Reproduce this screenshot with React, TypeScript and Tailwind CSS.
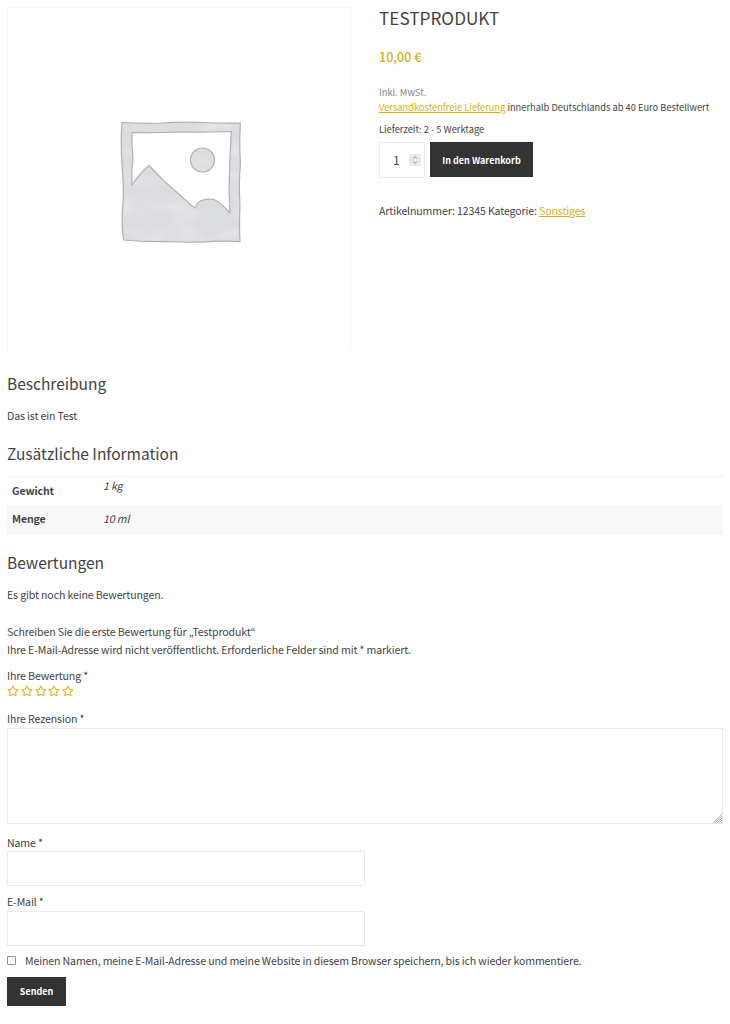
import { useState } from "react";
import { FaRegStar } from "react-icons/fa";

const attributes = [
  { label: "Gewicht", value: "1 kg" },
  { label: "Menge", value: "10 ml" },
];

const frame =
  "M22 22.5 Q45 23.8 62 23 Q82 21.5 103 22.5 Q122 23.5 140.5 23 Q139 42 140.5 63 Q138.5 85 140 105 Q139 125 140 141.5 Q122 140.8 105 141.8 Q85 142.8 65 141.5 Q45 142 23.5 140 Q21 122 23 102 Q24 85 22 65 Q20.5 42 22 22.5 Z";
const opening =
  "M32 32.5 Q55 33 78 32 Q105 32.5 131.5 31.5 Q130 50 129.5 72 Q128.5 92 130 113 Q122 103.5 114 99.5 Q106 98.5 100.5 101 Q96.5 103 95.5 108 Q91 106 87 101.5 L64 81 L49 65.5 Q40 73 32 85 Q31 72 33 58 Q31.5 45 32 32.5 Z";

function PlaceholderImage() {
  return (
    <svg viewBox="0 0 160 160" className="w-[160px] h-[160px]">
      <defs>
        <filter id="wash" x="0" y="0" width="100%" height="100%">
          <feTurbulence type="fractalNoise" baseFrequency="0.03 0.07" numOctaves="3" seed="4" />
          <feColorMatrix values="0 0 0 0 0.79  0 0 0 0 0.8  0 0 0 0 0.82  1.6 0 0 0 -0.6" />
          <feComposite in2="SourceGraphic" operator="in" result="spots" />
          <feMerge>
            <feMergeNode in="SourceGraphic" />
            <feMergeNode in="spots" />
          </feMerge>
        </filter>
      </defs>
      <g fill="#dbdce0" filter="url(#wash)">
        <path fillRule="evenodd" d={`${frame} ${opening}`} />
        <circle cx="102.5" cy="60" r="12" />
      </g>
      <g fill="none" stroke="#b0b0b2" strokeWidth="1.2" strokeLinejoin="round">
        <path d={frame} />
        <path d={opening} />
        <circle cx="102.5" cy="60" r="12" />
      </g>
    </svg>
  );
}

export default function App() {
  const [rating, setRating] = useState(0);

  return (
    <div className="w-[730px] h-[1024px] overflow-hidden bg-white pt-[5px] px-[7px] font-['Noto_Sans_CJK_KR','Noto_Sans',sans-serif] text-[10.6px] tracking-[-0.14px] leading-[18px] text-[#434343] whitespace-nowrap">
      {/* Product */}
      <div className="flex gap-7 h-[345px]">
        <div className="w-[344px] h-[343px] mt-[2px] shrink-0 border border-b-0 border-[#f5f5f5] flex items-center justify-center">
          <div className="pt-[2px] pl-[2px]">
            <PlaceholderImage />
          </div>
        </div>

        <div className="flex-1 min-w-0">
          <h1 className="mt-px text-[17.2px] leading-6 tracking-normal">TESTPRODUKT</h1>
          <p className="mt-[17px] text-[12.6px] leading-5 tracking-normal font-medium text-[#d9ae16]">10,00 €</p>
          <p className="mt-[18px] text-[9.3px] leading-[14px] tracking-normal text-[#858585]">Inkl. MwSt.</p>
          <p className="mt-px text-[9.3px] leading-[14px] tracking-normal">
            <a href="#" className="text-[#d9ae16] underline">Versandkostenfreie Lieferung</a> innerhalb Deutschlands ab 40 Euro Bestellwert
          </p>
          <p className="mt-2 text-[9.3px] leading-[14px] tracking-normal">Lieferzeit: 2 - 5 Werktage</p>

          <div className="mt-[6px] flex gap-[5px] h-9">
            <div className="w-[46px] h-9 border border-[#ececec] flex items-center justify-between pl-[13px] pr-[3px]">
              <span className="text-[12px]">1</span>
              <span className="w-3 h-3 bg-[#e9e9ed] flex items-center justify-center">
                <svg viewBox="0 0 12 12" className="w-3 h-3" fill="none" stroke="#86868a" strokeWidth="1">
                  <path d="M4 4.5 L6 2.5 L8 4.5 M4 7.5 L6 9.5 L8 7.5" />
                </svg>
              </span>
            </div>
            <button className="w-[103px] h-[35px] pt-[2px] bg-[#333333] text-white font-bold text-[9px] tracking-normal">In den Warenkorb</button>
          </div>

          <p className="mt-6">
            Artikelnummer: 12345 Kategorie: <a href="#" className="text-[#d9ae16] underline">Sonstiges</a>
          </p>
        </div>
      </div>

      {/* Description */}
      <h2 className="mt-[21px] text-[15.5px] leading-6 tracking-normal">Beschreibung</h2>
      <p className="mt-3">Das ist ein Test</p>

      {/* Attributes */}
      <h2 className="mt-4 text-[15.5px] leading-6 tracking-normal">Zusätzliche Information</h2>
      <table className="mt-[11px] w-full border-collapse">
        <tbody>
          {attributes.map((row, i) => (
            <tr key={row.label} className={i % 2 ? "h-7 bg-[#f8f8f8] border-b border-[#f1f1f1]" : "h-7 border-t border-[#f1f1f1]"}>
              <th className="w-[96px] pl-[5px] text-left font-bold">{row.label}</th>
              <td className={i % 2 ? "italic" : "italic pb-[10px]"}>{row.value}</td>
            </tr>
          ))}
        </tbody>
      </table>

      {/* Reviews */}
      <h2 className="mt-4 text-[15.5px] leading-6 tracking-normal">Bewertungen</h2>
      <p className="mt-3">Es gibt noch keine Bewertungen.</p>
      <p className="mt-[19px]">Schreiben Sie die erste Bewertung für „Testprodukt“</p>
      <p>Ihre E-Mail-Adresse wird nicht veröffentlicht. Erforderliche Felder sind mit * markiert.</p>

      <form onSubmit={(e) => e.preventDefault()}>
        <label className="block mt-2 h-[17px]">Ihre Bewertung *</label>
        <div className="flex items-center gap-[2px] h-[14px] text-[#d9ae16]">
          {[1, 2, 3, 4, 5].map((n) => (
            <button key={n} type="button" onClick={() => setRating(n)} aria-pressed={rating === n} className="w-[11.8px]">
              <FaRegStar className="w-[11.8px] h-[11.8px]" />
            </button>
          ))}
        </div>

        <label className="block mt-3">Ihre Rezension *</label>
        <div className="relative h-24">
          <textarea className="block w-full h-24 border border-[#e9e9e9] resize-none" />
          <svg viewBox="0 0 9 9" className="absolute right-px bottom-px w-[9px] h-[9px]" stroke="#a8a8a8" strokeWidth="0.9">
            <path d="M0 9 L9 0 M2 9 L9 2 M4 9 L9 4 M6 9 L9 6 M8 9 L9 8" />
          </svg>
        </div>

        <label className="block mt-[10px] h-[17px]">Name *</label>
        <input type="text" className="block w-[358px] h-[35px] border border-[#e9e9e9]" />

        <label className="block mt-[7px]">E-Mail *</label>
        <input type="text" className="block w-[358px] h-[35px] border border-[#e9e9e9]" />

        <label className="flex items-center mt-[6px] h-[18px]">
          <input type="checkbox" className="appearance-none w-[9px] h-[9px] border border-[#8f8f9d] rounded-[1px] mr-[9px]" />
          Meinen Namen, meine E-Mail-Adresse und meine Website in diesem Browser speichern, bis ich wieder kommentiere.
        </label>

        <button type="submit" className="block mt-[7px] w-[59px] h-[29px] pt-px bg-[#333333] text-white font-bold text-[9px] tracking-normal">
          Senden
        </button>
      </form>
    </div>
  );
}
